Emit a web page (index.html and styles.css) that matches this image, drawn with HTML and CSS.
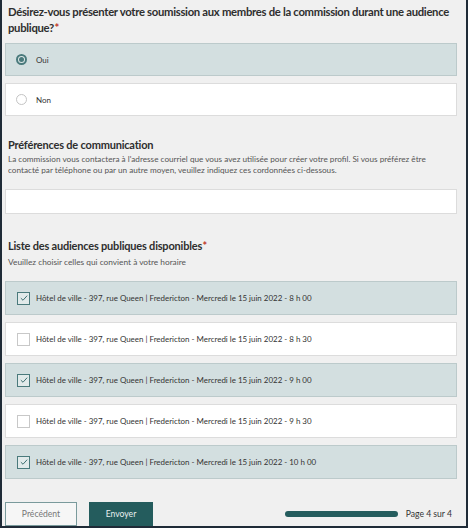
FILE: index.html
```html
<!DOCTYPE html>
<html lang="fr">
<head>
<meta charset="utf-8">
<link rel="stylesheet" href="styles.css">
</head>
<body>
<div class="frame">
  <div class="q-title required">Désirez-vous présenter votre soumission aux membres de la commission durant une audience publique?</div>
  <div class="options">
    <div class="opt selected"><span class="radio on"></span><span class="opt-label">Oui</span></div>
    <div class="opt"><span class="radio"></span><span class="opt-label">Non</span></div>
  </div>

  <div class="sec-title">Préférences de communication</div>
  <div class="desc">La commission vous contactera à l'adresse courriel que vous avez utilisée pour créer votre profil. Si vous préférez être contacté par téléphone ou par un autre moyen, veuillez indiquez ces cordonnées ci-dessous.</div>
  <div class="input"></div>

  <div class="sec-title list-title required">Liste des audiences publiques disponibles</div>
  <div class="desc small">Veuillez choisir celles qui convient à votre horaire</div>
  <div class="checks">
    <div class="opt chk selected"><span class="box on"><svg viewBox="0 0 12 12" width="10" height="10"><path d="M2.2 6.2 L4.8 8.7 L9.8 3.2" fill="none" stroke="#3f7072" stroke-width="1.2"/></svg></span><span class="opt-label">Hôtel de ville - 397, rue Queen | Fredericton - Mercredi le 15 juin 2022 - 8 h 00</span></div>
    <div class="opt chk"><span class="box"></span><span class="opt-label">Hôtel de ville - 397, rue Queen | Fredericton - Mercredi le 15 juin 2022 - 8 h 30</span></div>
    <div class="opt chk selected"><span class="box on"><svg viewBox="0 0 12 12" width="10" height="10"><path d="M2.2 6.2 L4.8 8.7 L9.8 3.2" fill="none" stroke="#3f7072" stroke-width="1.2"/></svg></span><span class="opt-label">Hôtel de ville - 397, rue Queen | Fredericton - Mercredi le 15 juin 2022 - 9 h 00</span></div>
    <div class="opt chk"><span class="box"></span><span class="opt-label">Hôtel de ville - 397, rue Queen | Fredericton - Mercredi le 15 juin 2022 - 9 h 30</span></div>
    <div class="opt chk selected"><span class="box on"><svg viewBox="0 0 12 12" width="10" height="10"><path d="M2.2 6.2 L4.8 8.7 L9.8 3.2" fill="none" stroke="#3f7072" stroke-width="1.2"/></svg></span><span class="opt-label">Hôtel de ville - 397, rue Queen | Fredericton - Mercredi le 15 juin 2022 - 10 h 00</span></div>
  </div>

  <div class="footer">
    <button class="btn prev">Précédent</button>
    <button class="btn send">Envoyer</button>
    <div class="progress"><div class="bar"></div><span class="page">Page 4 sur 4</span></div>
  </div>
</div>
</body>
</html>
```

FILE: styles.css
```css
* { box-sizing: border-box; }
html, body { margin: 0; padding: 0; background: #f0f0f0; }
body { font-family: Lato, "Open Sans", sans-serif; color: #333; }
.frame {
  width: 468px;
  height: 528px;
  border-left: 2px solid #1f2b37;
  border-right: 2px solid #1f2b37;
  border-bottom: 2px solid #1f2b37;
  background: #f0f0f0;
  padding: 4px 9px 0 3px;
  display: flex;
  flex-direction: column;
  overflow: hidden;
}
.q-title {
  font-size: 11.3px;
  font-weight: 700;
  letter-spacing: -0.3px;
  line-height: 16px;
  padding-left: 3px;
  margin-right: -6px;
  color: #2e2e2e;
}
.required::after { content: "*"; color: #c0392b; margin-left: 0.5px; letter-spacing: 0; }
.options { display: flex; flex-direction: column; gap: 7px; margin-top: 7px; }
.opt {
  height: 33px;
  background: #fff;
  border: 1px solid #dcdcdc;
  display: flex;
  align-items: center;
  padding-left: 10px;
}
.opt.selected { background: #d3dfe0; border-color: #bccacb; }
.opt-label { font-size: 8px; color: #333; margin-left: 9px; }
.radio {
  width: 11px; height: 11px; border-radius: 50%;
  border: 1px solid #c4c4c4; background: #fff;
  display: flex; align-items: center; justify-content: center;
  flex: none;
}
.radio.on { border: 2px solid #4a7a7c; background: #dfe8e8; }
.radio.on::after { content: ""; width: 5px; height: 5px; border-radius: 50%; background: #4a7a7c; }
.sec-title {
  font-size: 11px;
  font-weight: 700;
  letter-spacing: -0.2px;
  line-height: 16px;
  margin-top: 21px;
  padding-left: 3px;
  color: #2e2e2e;
}
.desc {
  font-size: 8.2px;
  line-height: 11px;
  color: #555;
  padding-left: 3px;
  margin-top: 1px;
}
.desc.small { margin-top: 3px; font-size: 8.3px; }
.input {
  height: 25px;
  margin-top: 13px;
  background: #fff;
  border: 1px solid #dcdcdc;
}
.list-title { margin-top: 24px; }
.checks { display: flex; flex-direction: column; gap: 7px; margin-top: 13px; }
.opt.chk { height: 34px; padding-left: 11px; }
.opt.chk .opt-label { font-size: 7.95px; margin-left: 6px; }
.box {
  width: 13px; height: 13px; flex: none;
  border: 1px solid #c8c8c8; background: #fff;
  display: flex; align-items: center; justify-content: center;
}
.box.on { border: 1.5px solid #4a7a7c; background: #e1eaea; }
.footer {
  display: flex;
  align-items: flex-end;
  margin-top: auto;
}
.btn {
  height: 24px;
  font-family: Lato, "Open Sans", sans-serif;
  font-size: 8.6px;
  padding: 0;
  cursor: pointer;
}
.btn.prev { width: 72px; background: #f6f6f6; border: 1px solid #7a9a9c; color: #777; }
.btn.send { width: 64px; margin-left: 12px; background: #245c5d; border: 1px solid #245c5d; color: #e8efef; }
.progress { display: flex; align-items: center; margin-left: auto; height: 24px; margin-right: 5px; }
.bar { width: 113px; height: 6px; border-radius: 3px; background: #245c5d; }
.page { font-size: 8.6px; color: #333; margin-left: 8px; }
```
